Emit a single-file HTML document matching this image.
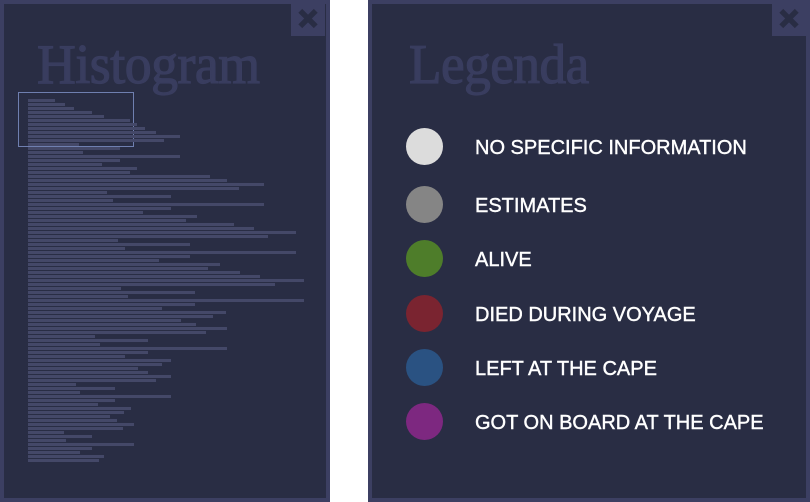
<!DOCTYPE html>
<html><head><meta charset="utf-8"><style>
*{margin:0;padding:0;box-sizing:border-box}
body{width:810px;height:502px;background:#fff;position:relative;overflow:hidden;font-family:"Liberation Sans",sans-serif}
.panel{position:absolute;top:0;height:502px;background:#292d44;border:4px solid #3c3f62}
.close{position:absolute;top:0;width:34px;height:32px;background:#3c3f62;color:#292d44;font-size:26px;font-weight:bold;text-align:center;line-height:30px;-webkit-text-stroke:2px #292d44}
.title{position:absolute;font-family:"Liberation Serif",serif;color:#393d5f;font-size:56px;letter-spacing:-0.5px;transform-origin:0 0;-webkit-text-stroke:1.2px #393d5f}
.b{position:absolute;left:28px;height:3px;background:#444868}
.c{position:absolute;left:406px;width:37px;height:37px;border-radius:50%}
.t{position:absolute;left:475px;color:#fff;font-size:20px;line-height:20px;white-space:nowrap;letter-spacing:0;-webkit-text-stroke:0.4px #fff}
</style></head><body>
<div class="panel" style="left:0;width:330px"></div>
<div class="close" style="left:291px;top:4px">✕</div>
<div class="title" style="left:37px;top:33px;transform:scaleX(0.96)">Histogram</div>
<div style="position:absolute;left:18px;top:92px;width:116px;height:55px;border:1.5px solid #6f7fb0"></div>
<div id="bars"></div>
<div class="panel" style="left:368px;width:442px"></div>
<div class="close" style="left:772px;top:4px">✕</div>
<div class="title" style="left:409px;top:33px;transform:scaleX(0.95)">Legenda</div>
<div class="c" style="top:128px;background:#dcdcdc"></div><div class="t" style="top:138px">NO SPECIFIC INFORMATION</div>
<div class="c" style="top:186px;background:#858585"></div><div class="t" style="top:196px">ESTIMATES</div>
<div class="c" style="top:240px;background:#4e7d2a"></div><div class="t" style="top:250px">ALIVE</div>
<div class="c" style="top:295px;background:#7a2430"></div><div class="t" style="top:305px">DIED DURING VOYAGE</div>
<div class="c" style="top:349px;background:#2a5282"></div><div class="t" style="top:359px">LEFT AT THE CAPE</div>
<div class="c" style="top:403px;background:#7d2880"></div><div class="t" style="top:413px">GOT ON BOARD AT THE CAPE</div>
<script>
var e=[55,65,74,92,104,130,137,145,156,180,164,79,120,83,180,120,102,137,130,210,227,264,239,107,171,113,264,171,143,197,186,234,254,296,268,118,190,125,296,190,159,220,208,240,260,304,275,121,195,128,304,195,162,226,213,181,196,227,206,95,148,100,227,148,125,171,162,138,148,171,156,76,115,80,171,115,98,131,124,110,117,134,123,64,92,66,134,92,80,104,99];
var h='';for(var i=0;i<e.length;i++){h+='<div class="b" style="top:'+(99+i*4)+'px;width:'+(e[i]-28)+'px"></div>';}
document.getElementById('bars').innerHTML=h;
</script>
</body></html>
